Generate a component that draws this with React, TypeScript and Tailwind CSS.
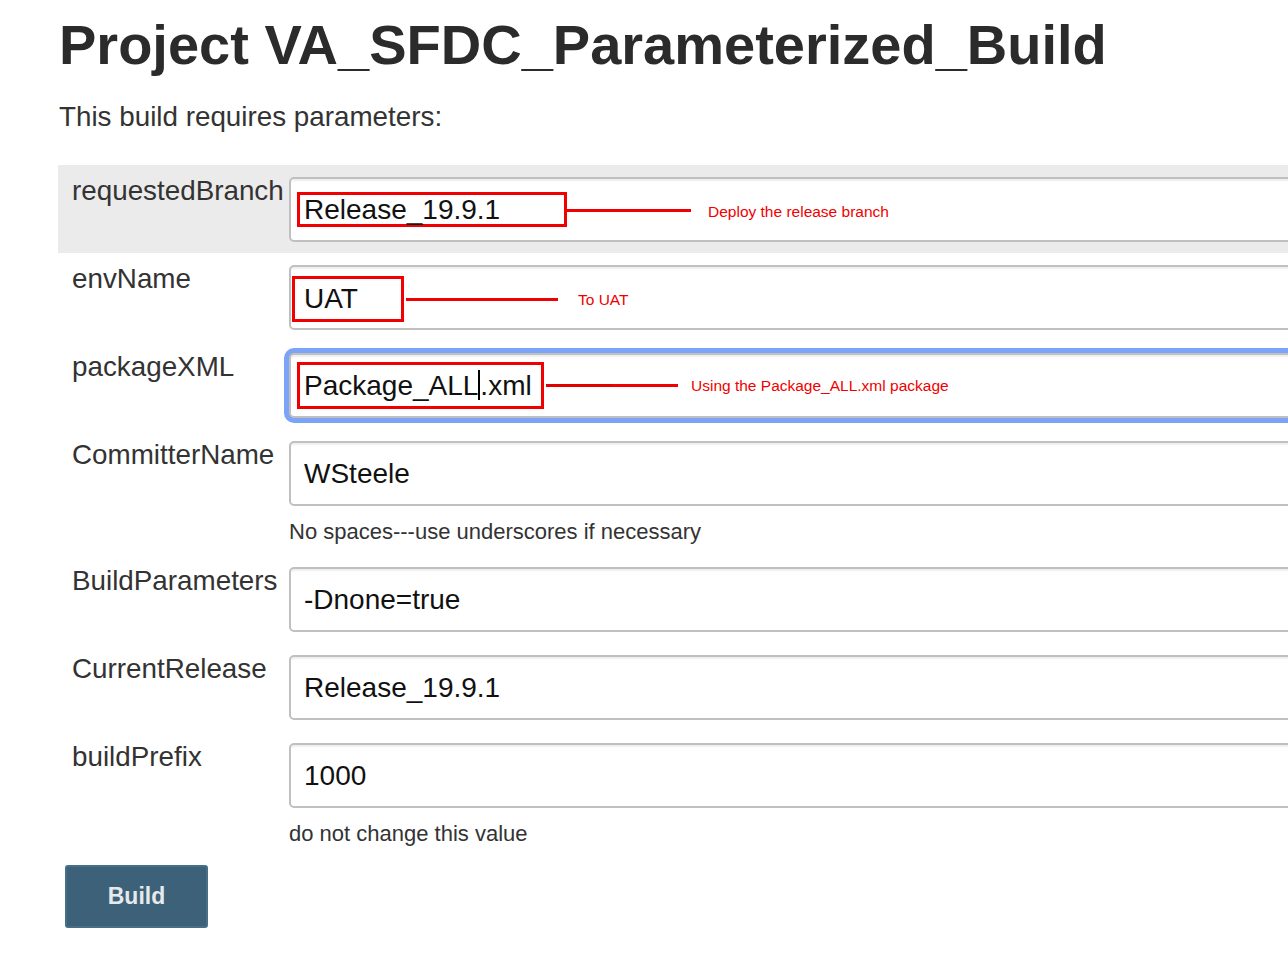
type Note = {
  box: string;
  line: string;
  text: string;
  textClass: string;
};

type Param = {
  name: string;
  value: string;
  help?: string;
  shaded?: boolean;
  focused?: boolean;
  note?: Note;
};

const font = { fontFamily: '"Liberation Sans", Arial, Helvetica, sans-serif' };

const params: Param[] = [
  {
    name: 'requestedBranch',
    value: 'Release_19.9.1',
    shaded: true,
    note: {
      box: 'ml-[6px] h-[35px] w-[270px] pl-[4px]',
      line: 'mt-[2px] w-[124px]',
      text: 'Deploy the release branch',
      textClass: 'ml-[17px] mt-[4px]',
    },
  },
  {
    name: 'envName',
    value: 'UAT',
    note: {
      box: 'ml-[1px] mt-[2px] h-[46px] w-[112px] pl-[9px]',
      line: 'ml-[2px] mt-[3px] w-[152px]',
      text: 'To UAT',
      textClass: 'ml-[20px] mt-[4px]',
    },
  },
  {
    name: 'packageXML',
    value: 'Package_ALL.xml',
    focused: true,
    note: {
      box: 'ml-[6px] h-[47px] w-[247px] pl-[4px]',
      line: 'ml-[2px] w-[132px] border-l-[66px] border-[#e00000]',
      text: 'Using the Package_ALL.xml package',
      textClass: 'ml-[13px] mt-[1px]',
    },
  },
  { name: 'CommitterName', value: 'WSteele', help: 'No spaces---use underscores if necessary' },
  { name: 'BuildParameters', value: '-Dnone=true' },
  { name: 'CurrentRelease', value: 'Release_19.9.1' },
  { name: 'buildPrefix', value: '1000', help: 'do not change this value' },
];

function Value({ p }: { p: Param }) {
  if (!p.focused) return <span className="whitespace-pre">{p.value}</span>;
  // text caret sits between "ALL" and ".xml"
  return (
    <span className="whitespace-pre">
      Package_ALL<span className="inline-block h-[30px] w-[2px] translate-y-[5px] bg-black" />.xml
    </span>
  );
}

function Field({ p }: { p: Param }) {
  return (
    <div
      className={`flex h-[65px] items-center overflow-hidden rounded-[5px] border-2 border-[#c0c0c0] bg-white text-[28px] text-[#111] shadow-[inset_0_3px_2px_-1px_rgba(0,0,0,0.07)] ${
        p.note ? '' : 'pl-[13px]'
      } ${p.focused ? 'ring-[5px] ring-[#7ba3f6]' : ''}`}
    >
      {p.note ? (
        <>
          <div className={`flex shrink-0 items-center border-[3px] border-[#f00000] ${p.note.box}`}>
            <Value p={p} />
          </div>
          <div className={`h-[3px] shrink-0 bg-[#f00000] ${p.note.line}`} />
          <span className={`whitespace-nowrap text-[15.5px] leading-none text-[#f00000] ${p.note.textClass}`}>
            {p.note.text}
          </span>
        </>
      ) : (
        <Value p={p} />
      )}
    </div>
  );
}

export default function App() {
  return (
    <main className="min-h-screen overflow-hidden bg-white pl-[58px] text-[#333]" style={font}>
      <h1 className="mt-[12px] whitespace-nowrap pl-[1px] text-[56px] font-bold leading-[66px] text-[#2b2b2b]">
        Project VA_SFDC_Parameterized_Build
      </h1>
      <p className="mt-[23px] pl-[1px] text-[27.8px] leading-[32px]">This build requires parameters:</p>

      <div className="mt-[32px] w-[1300px]">
        {params.map((p) => (
          <div key={p.name} className={`flex items-start pb-[11px] pt-[12px] ${p.shaded ? 'bg-[#ebebeb]' : ''}`}>
            <div className="w-[231px] shrink-0 pl-[14px] pt-[1px] text-[27.8px] leading-[26px]">{p.name}</div>
            <div className="flex-1">
              <Field p={p} />
              {p.help && <div className="mb-[-1px] mt-[13px] text-[22px] leading-[26px]">{p.help}</div>}
            </div>
          </div>
        ))}
      </div>

      <button
        type="button"
        className="ml-[7px] mt-[8px] h-[63px] w-[143px] rounded-[3px] border-2 border-[#46708a] bg-[#3d6178] text-[23px] font-bold text-[#e6eaed]"
      >
        Build
      </button>
    </main>
  );
}
